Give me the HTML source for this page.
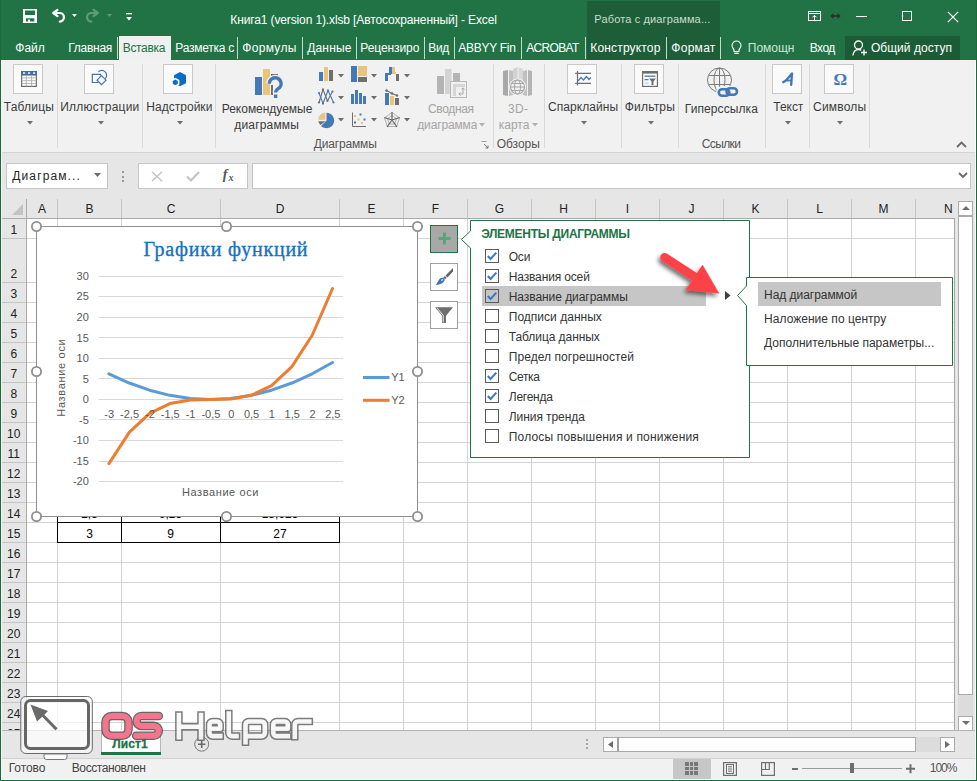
<!DOCTYPE html><html><head><meta charset="utf-8"><style>
*{margin:0;padding:0;box-sizing:border-box}
html,body{width:977px;height:781px;overflow:hidden;background:#fff;font-family:"Liberation Sans",sans-serif;font-size:12px;color:#262626}
.a{position:absolute}
.t{position:absolute;white-space:nowrap;line-height:1}
svg.a{overflow:visible}
</style></head><body>
<div class="a" style="left:0px;top:0px;width:977px;height:60px;background:#217346;"></div>
<div class="a" style="left:587px;top:1px;width:133px;height:59px;background:#1d5e39;"></div>
<div class="a" style="left:845px;top:36px;width:115px;height:24px;background:#1b5c37;"></div>
<div class="a" style="left:119px;top:36px;width:52px;height:24px;background:#f0f0f0;"></div>
<div class="t" style="left:230.28px;top:13.84px;font-size:12px;color:#fff;letter-spacing:-0.124px;">Книга1 (version 1).xlsb [Автосохраненный] - Excel</div>
<div class="t" style="left:594.34px;top:14.39px;font-size:11px;color:#c9dccb;letter-spacing:0.137px;">Работа с диаграмма...</div>
<div class="t" style="left:15.28px;top:41.84px;font-size:12px;color:#fff;letter-spacing:0.021px;">Файл</div>
<div class="t" style="left:68.28px;top:41.84px;font-size:12px;color:#fff;letter-spacing:-0.268px;">Главная</div>
<div class="t" style="left:175.28px;top:41.84px;font-size:12px;color:#fff;letter-spacing:-0.236px;">Разметка с</div>
<div class="t" style="left:242.28px;top:41.84px;font-size:12px;color:#fff;letter-spacing:0.310px;">Формулы</div>
<div class="t" style="left:307.28px;top:41.84px;font-size:12px;color:#fff;letter-spacing:0.144px;">Данные</div>
<div class="t" style="left:360.28px;top:41.84px;font-size:12px;color:#fff;letter-spacing:-0.084px;">Рецензиро</div>
<div class="t" style="left:428.28px;top:41.84px;font-size:12px;color:#fff;letter-spacing:-0.319px;">Вид</div>
<div class="t" style="left:526.28px;top:41.84px;font-size:12px;color:#fff;letter-spacing:-0.674px;">ACROBAT</div>
<div class="t" style="left:590.28px;top:41.84px;font-size:12px;color:#fff;letter-spacing:0.166px;">Конструктор</div>
<div class="t" style="left:671.28px;top:41.84px;font-size:12px;color:#fff;letter-spacing:0.288px;">Формат</div>
<div class="t" style="left:809.78px;top:41.84px;font-size:12px;color:#fff;letter-spacing:-0.525px;">Вход</div>
<div class="t" style="left:870.88px;top:41.84px;font-size:12px;color:#fff;letter-spacing:0.041px;">Общий доступ</div>
<div class="t" style="left:458.28px;top:41.84px;font-size:12px;color:#fff;letter-spacing:-0.267px;width:58px;overflow:hidden;">ABBYY Fine</div>
<div class="t" style="left:122.78px;top:41.84px;font-size:12px;color:#217346;letter-spacing:-0.338px;">Вставка</div>
<div class="t" style="left:747.78px;top:41.84px;font-size:12px;color:#cfe6d6;width:46.5px;overflow:hidden;">Помощник</div>
<div class="a" style="left:117px;top:37px;width:1px;height:22px;background:#c5dacc;"></div>
<div class="a" style="left:237px;top:37px;width:1px;height:22px;background:#c5dacc;"></div>
<div class="a" style="left:302px;top:37px;width:1px;height:22px;background:#c5dacc;"></div>
<div class="a" style="left:356px;top:37px;width:1px;height:22px;background:#c5dacc;"></div>
<div class="a" style="left:424px;top:37px;width:1px;height:22px;background:#c5dacc;"></div>
<div class="a" style="left:454px;top:37px;width:1px;height:22px;background:#c5dacc;"></div>
<div class="a" style="left:521px;top:37px;width:1px;height:22px;background:#c5dacc;"></div>
<div class="a" style="left:585px;top:37px;width:1px;height:22px;background:#c5dacc;"></div>
<div class="a" style="left:666px;top:37px;width:1px;height:22px;background:#c5dacc;"></div>
<div class="a" style="left:720px;top:37px;width:1px;height:22px;background:#c5dacc;"></div>
<svg class="a" style="left:22px;top:9px;" width="16" height="15" viewBox="0 0 16 15"><path d="M1 0H15V14H1Z M3 1.5V6.1H13V1.5Z M4 9.2H12.3V12.6H8V10.5H6.1V12.6H4Z" fill="#fff" fill-rule="evenodd"/></svg>
<svg class="a" style="left:51px;top:8px;" width="14" height="15" viewBox="0 0 14 15"><path d="M5 5H8.5A4.3 4.3 0 0 1 8.8 13.6" fill="none" stroke="#fff" stroke-width="2.2" stroke-linecap="round"/><path d="M6.5 1.8L2.2 5L6.5 8.2" fill="none" stroke="#fff" stroke-width="2.2" stroke-linecap="round" stroke-linejoin="round"/></svg>
<svg class="a" style="left:72px;top:14px;" width="5" height="3" viewBox="0 0 5 3"><path d="M0 0H5L2.5 3Z" fill="#fff"/></svg>
<svg class="a" style="left:86px;top:8px;" width="14" height="15" viewBox="0 0 14 15"><path d="M9 5H5.5A4.3 4.3 0 0 0 5.2 13.6" fill="none" stroke="#5f9c78" stroke-width="2.2" stroke-linecap="round"/><path d="M7.5 1.8L11.8 5L7.5 8.2" fill="none" stroke="#5f9c78" stroke-width="2.2" stroke-linecap="round" stroke-linejoin="round"/></svg>
<svg class="a" style="left:107px;top:14px;" width="5" height="3" viewBox="0 0 5 3"><path d="M0 0H5L2.5 3Z" fill="#5f9c78"/></svg>
<svg class="a" style="left:126px;top:13px;" width="6" height="9" viewBox="0 0 6 9"><rect x="0" y="0" width="6" height="1.3" fill="#fff"/><path d="M0 4H6L3 7.5Z" fill="#fff"/></svg>
<svg class="a" style="left:808px;top:11px;" width="13" height="10" viewBox="0 0 13 10"><rect x="0.5" y="0.5" width="12" height="9" fill="none" stroke="#fff" stroke-width="1"/><path d="M0.5 2.5H12.5" stroke="#fff"/><path d="M6.5 9V4.5M4.5 6.3L6.5 4.3L8.5 6.3" fill="none" stroke="#fff" stroke-width="1"/></svg>
<svg class="a" style="left:830px;top:12px;" width="11" height="8" viewBox="0 0 11 8"><path d="M2.5 4H8.5" stroke="#2b2b2b" stroke-width="1.6"/><path d="M0.3 4L3.5 1V7Z M10.7 4L7.5 1V7Z" fill="#2b2b2b"/></svg>
<div class="a" style="left:856px;top:16px;width:11px;height:1px;background:#fff;"></div>
<svg class="a" style="left:902px;top:11px;" width="11" height="11" viewBox="0 0 11 11"><rect x="0.5" y="0.5" width="9" height="9" fill="none" stroke="#fff" stroke-width="1"/></svg>
<svg class="a" style="left:947px;top:11px;" width="12" height="12" viewBox="0 0 12 12"><path d="M0.8 0.8L11.2 11.2M11.2 0.8L0.8 11.2" stroke="#fff" stroke-width="1.2"/></svg>
<svg class="a" style="left:731px;top:40px;" width="11" height="15" viewBox="0 0 11 15"><path d="M5.5 1A4.5 4.5 0 0 0 1 5.5C1 7.5 2.5 8.7 3 10V11.5H8V10C8.5 8.7 10 7.5 10 5.5A4.5 4.5 0 0 0 5.5 1Z" fill="none" stroke="#fff" stroke-width="1.1"/><path d="M3.2 13.3H7.8" stroke="#fff" stroke-width="1.2"/></svg>
<svg class="a" style="left:852px;top:40px;" width="16" height="16" viewBox="0 0 16 16"><circle cx="6.5" cy="5" r="4" fill="none" stroke="#fff" stroke-width="1.3"/><path d="M0.8 15.5C1.5 11.5 3.5 9.5 6.5 9.5C7.5 9.5 8.5 9.8 9.2 10.3" fill="none" stroke="#fff" stroke-width="1.3"/><path d="M12 9.5V15.5M9 12.5H15" stroke="#fff" stroke-width="1.3"/></svg>
<div class="a" style="left:0px;top:60px;width:977px;height:92px;background:#f1f1f1;"></div>
<div class="a" style="left:0px;top:152px;width:977px;height:1px;background:#d4d4d4;"></div>
<div class="a" style="left:57px;top:64px;width:1px;height:84px;background:#d8d8d8;"></div>
<div class="a" style="left:142px;top:64px;width:1px;height:84px;background:#d8d8d8;"></div>
<div class="a" style="left:215px;top:64px;width:1px;height:84px;background:#d8d8d8;"></div>
<div class="a" style="left:493px;top:64px;width:1px;height:84px;background:#d8d8d8;"></div>
<div class="a" style="left:544px;top:64px;width:1px;height:84px;background:#d8d8d8;"></div>
<div class="a" style="left:621px;top:64px;width:1px;height:84px;background:#d8d8d8;"></div>
<div class="a" style="left:678px;top:64px;width:1px;height:84px;background:#d8d8d8;"></div>
<div class="a" style="left:765px;top:64px;width:1px;height:84px;background:#d8d8d8;"></div>
<div class="a" style="left:809px;top:64px;width:1px;height:84px;background:#d8d8d8;"></div>
<div class="a" style="left:869px;top:64px;width:1px;height:84px;background:#d8d8d8;"></div>
<div class="a" style="left:13px;top:64px;width:30px;height:30px;background:#fafafa;border:1px solid #c9c9c9;"></div>
<svg class="a" style="left:21px;top:71px;" width="16" height="16" viewBox="0 0 16 16"><rect x="0" y="0" width="16" height="4" fill="#3d6eb4"/><rect x="2" y="1.3" width="2.2" height="1.4" fill="#fff"/><rect x="7" y="1.3" width="2.2" height="1.4" fill="#fff"/><rect x="12" y="1.3" width="2.2" height="1.4" fill="#fff"/><rect x="0.6" y="4" width="14.8" height="11.4" fill="#fff" stroke="#6b6b6b" stroke-width="1.2"/><path d="M5.3 4V15.4M10.6 4V15.4M0.6 6.9H15.4M0.6 9.7H15.4M0.6 12.5H15.4" stroke="#b0b0b0" stroke-width="0.9"/></svg>
<div class="t" style="left:3.78px;top:100.84px;font-size:12px;color:#3b3b3b;letter-spacing:0.177px;">Таблицы</div>
<svg class="a" style="left:27px;top:121px;" width="6" height="3.5" viewBox="0 0 6 3.5"><path d="M0 0H6L3.0 3.5Z" fill="#6d6d6d"/></svg>
<div class="a" style="left:84px;top:64px;width:30px;height:30px;background:#fafafa;border:1px solid #c9c9c9;"></div>
<svg class="a" style="left:91px;top:70px;" width="16" height="16" viewBox="0 0 16 16"><path d="M7.5 12.5H1.3V4.3H9.5V5.5" fill="none" stroke="#3f76b8" stroke-width="1.2"/><path d="M10.5 7.2L15 11.7L10.5 16.2L6 11.7Z" transform="translate(0,-1.5)" fill="none" stroke="#3f76b8" stroke-width="1.2"/><path d="M7.3 1.8A4.8 4.8 0 0 1 14.2 8.7" fill="none" stroke="#3f76b8" stroke-width="1.2"/></svg>
<div class="t" style="left:60.28px;top:100.84px;font-size:12px;color:#3b3b3b;letter-spacing:0.231px;">Иллюстрации</div>
<svg class="a" style="left:98px;top:121px;" width="6" height="3.5" viewBox="0 0 6 3.5"><path d="M0 0H6L3.0 3.5Z" fill="#6d6d6d"/></svg>
<div class="a" style="left:163px;top:64px;width:30px;height:30px;background:#fafafa;border:1px solid #c9c9c9;"></div>
<svg class="a" style="left:171px;top:71px;" width="16" height="16" viewBox="0 0 16 16"><path d="M9 1L15 4.2V12.3L9 15.2L3 12.3V4.2Z" fill="#0b6cc4"/><path d="M4.3 7.6L7.6 9.5V13.2L4.3 15.1L1 13.2V9.5Z" fill="#0b6cc4" stroke="#fafafa" stroke-width="1.6" stroke-linejoin="round"/></svg>
<div class="t" style="left:146.28px;top:100.84px;font-size:12px;color:#3b3b3b;letter-spacing:0.026px;">Надстройки</div>
<svg class="a" style="left:176.5px;top:121px;" width="6" height="3.5" viewBox="0 0 6 3.5"><path d="M0 0H6L3.0 3.5Z" fill="#6d6d6d"/></svg>
<svg class="a" style="left:254px;top:68px;" width="30" height="31" viewBox="0 0 30 31"><rect x="1" y="9" width="7" height="18" fill="#4479b8"/><rect x="9" y="1" width="7" height="26" fill="#eac47c"/><rect x="17" y="6" width="7" height="3.5" fill="#6e6e6e"/><path d="M18 27V17" fill="none" stroke="#6e6e6e" stroke-width="2"/><path d="M15.3 15.8A5.9 5.9 0 1 1 25.6 19.6C23.2 21.4 21.6 22 21.6 24.6" fill="none" stroke="#f1f1f1" stroke-width="6"/><path d="M15.3 15.8A5.9 5.9 0 1 1 25.6 19.6C23.2 21.4 21.6 22 21.6 24.6" fill="none" stroke="#4479b8" stroke-width="3.3"/><rect x="19.9" y="26.5" width="3.4" height="3.5" fill="#4479b8"/></svg>
<div class="t" style="left:221.78px;top:102.84px;font-size:12px;color:#3b3b3b;letter-spacing:-0.023px;">Рекомендуемые</div>
<div class="t" style="left:234.28px;top:118.84px;font-size:12px;color:#3b3b3b;letter-spacing:0.168px;">диаграммы</div>
<svg class="a" style="left:318px;top:66px;" width="16" height="16" viewBox="0 0 16 16"><rect x="1" y="6" width="4" height="9" fill="#4479b8"/><rect x="6" y="1" width="4" height="14" fill="#eac47c"/><rect x="11" y="4" width="4" height="11" fill="#6e6e6e"/></svg>
<svg class="a" style="left:338px;top:73.5px;" width="6" height="3.5" viewBox="0 0 6 3.5"><path d="M0 0H6L3.0 3.5Z" fill="#6d6d6d"/></svg>
<svg class="a" style="left:351px;top:66px;" width="17" height="17" viewBox="0 0 17 17"><rect x="0" y="0" width="6" height="16" fill="#4479b8"/><rect x="7" y="0" width="9" height="10" fill="#eac47c"/><rect x="7" y="11" width="9" height="5" fill="#6e6e6e"/></svg>
<svg class="a" style="left:371px;top:73.5px;" width="6" height="3.5" viewBox="0 0 6 3.5"><path d="M0 0H6L3.0 3.5Z" fill="#6d6d6d"/></svg>
<svg class="a" style="left:384px;top:66px;" width="16" height="16" viewBox="0 0 16 16"><rect x="1" y="7" width="3" height="8" fill="#4479b8"/><rect x="1" y="7" width="6" height="2" fill="#4479b8"/><rect x="5" y="1" width="3" height="7" fill="#4479b8"/><rect x="8" y="1" width="3" height="7" fill="#eac47c"/><rect x="9" y="6" width="3" height="2" fill="#eac47c"/><rect x="12" y="8" width="3" height="7" fill="#6e6e6e"/></svg>
<svg class="a" style="left:404px;top:73.5px;" width="6" height="3.5" viewBox="0 0 6 3.5"><path d="M0 0H6L3.0 3.5Z" fill="#6d6d6d"/></svg>
<svg class="a" style="left:318px;top:88px;" width="17" height="17" viewBox="0 0 17 17"><path d="M1 14.5L5 1.5L9.5 13L14.5 3.5" fill="none" stroke="#6e6e6e" stroke-width="1.1"/><path d="M1 5L5 15.5L10 2.5L15.5 14.5" fill="none" stroke="#4479b8" stroke-width="1.1"/><circle cx="1" cy="5" r="1.1" fill="#4479b8"/><circle cx="15.5" cy="14.5" r="1.1" fill="#4479b8"/><circle cx="5" cy="15.5" r="1.1" fill="#4479b8"/><circle cx="10" cy="2.5" r="1.1" fill="#4479b8"/><circle cx="1" cy="14.5" r="1.1" fill="#6e6e6e"/><circle cx="5" cy="1.5" r="1.1" fill="#6e6e6e"/><circle cx="9.5" cy="13" r="1.1" fill="#6e6e6e"/><circle cx="14.5" cy="3.5" r="1.1" fill="#6e6e6e"/></svg>
<svg class="a" style="left:338px;top:96px;" width="6" height="3.5" viewBox="0 0 6 3.5"><path d="M0 0H6L3.0 3.5Z" fill="#6d6d6d"/></svg>
<svg class="a" style="left:351px;top:89px;" width="16" height="16" viewBox="0 0 16 16"><rect x="0" y="5" width="3" height="10" fill="#4479b8"/><rect x="4" y="1" width="3" height="14" fill="#4479b8"/><rect x="8" y="4" width="3" height="11" fill="#4479b8"/><rect x="12" y="7" width="3" height="8" fill="#4479b8"/></svg>
<svg class="a" style="left:371px;top:96px;" width="6" height="3.5" viewBox="0 0 6 3.5"><path d="M0 0H6L3.0 3.5Z" fill="#6d6d6d"/></svg>
<svg class="a" style="left:384px;top:89px;" width="16" height="17" viewBox="0 0 16 17"><rect x="1" y="4" width="4" height="12" fill="#4479b8"/><rect x="6" y="7" width="4" height="9" fill="#eac47c"/><rect x="11" y="9" width="4" height="7" fill="#6e6e6e"/><path d="M2.5 1.5L8 4.5L13 6.5" fill="none" stroke="#6e6e6e" stroke-width="1.1"/><circle cx="2.5" cy="1.5" r="1.3" fill="#6e6e6e"/><circle cx="8" cy="4.5" r="1.3" fill="#6e6e6e"/><circle cx="13" cy="6.5" r="1.3" fill="#6e6e6e"/></svg>
<svg class="a" style="left:404px;top:96px;" width="6" height="3.5" viewBox="0 0 6 3.5"><path d="M0 0H6L3.0 3.5Z" fill="#6d6d6d"/></svg>
<svg class="a" style="left:317px;top:111px;" width="18" height="18" viewBox="0 0 18 18"><path d="M9.5 9.5V1.8A7.7 7.7 0 1 1 4 14.9Z" fill="#4479b8"/><path d="M8.3 8.8H1.2A7.2 7.2 0 0 1 8.3 1.6Z" fill="#eac47c"/><path d="M8.5 10.3L3.3 14A7.2 7.2 0 0 1 1.3 10.3Z" fill="#6e6e6e"/></svg>
<svg class="a" style="left:338px;top:118px;" width="6" height="3.5" viewBox="0 0 6 3.5"><path d="M0 0H6L3.0 3.5Z" fill="#6d6d6d"/></svg>
<svg class="a" style="left:351px;top:112px;" width="16" height="16" viewBox="0 0 16 16"><path d="M1.5 0.5V14.5H15" fill="none" stroke="#6e6e6e" stroke-width="1"/><rect x="3" y="3" width="2" height="2" fill="#eac47c"/><rect x="8.5" y="1.5" width="2" height="2" fill="#4479b8"/><rect x="6.5" y="6.5" width="2" height="2" fill="#eac47c"/><rect x="12.5" y="6.5" width="2" height="2" fill="#4479b8"/><rect x="3" y="9.5" width="2" height="2" fill="#4479b8"/><rect x="10" y="10" width="2" height="2" fill="#eac47c"/></svg>
<svg class="a" style="left:371px;top:118px;" width="6" height="3.5" viewBox="0 0 6 3.5"><path d="M0 0H6L3.0 3.5Z" fill="#6d6d6d"/></svg>
<svg class="a" style="left:383px;top:111px;" width="18" height="18" viewBox="0 0 18 18"><path d="M9 1.5L16.5 6.8L13.6 15.5H4.4L1.5 6.8Z" fill="none" stroke="#a0a0a0" stroke-width="0.8"/><path d="M9 4.5L13.5 7.7L11.8 13H6.2L4.5 7.7Z" fill="none" stroke="#a0a0a0" stroke-width="0.8"/><path d="M9 1V9M16.8 6.5L9 9M14 16L9 9M4 16L9 9M1.2 6.5L9 9" stroke="#666" stroke-width="1.2"/></svg>
<svg class="a" style="left:404px;top:118px;" width="6" height="3.5" viewBox="0 0 6 3.5"><path d="M0 0H6L3.0 3.5Z" fill="#6d6d6d"/></svg>
<div class="t" style="left:313.78px;top:138.04px;font-size:12px;color:#555;letter-spacing:-0.160px;">Диаграммы</div>
<svg class="a" style="left:436px;top:68px;" width="32" height="31" viewBox="0 0 32 31"><rect x="1" y="8" width="7" height="18" fill="#b4b4b4"/><rect x="9" y="1" width="6.5" height="25" fill="#d3d3d3"/><rect x="17" y="5" width="7" height="8" fill="#b4b4b4"/><rect x="14.5" y="13.5" width="16" height="16" fill="#f1f1f1" stroke="#b8b8b8" stroke-width="1"/><rect x="17" y="16" width="3" height="12" fill="#d6d6d6"/><rect x="17" y="16" width="12" height="3" fill="#d6d6d6"/><path d="M23 26H27V20M25.5 21.5L27 19.8L28.5 21.5M24.5 24.5L22.8 26L24.5 27.5" fill="none" stroke="#a8a8a8" stroke-width="1"/></svg>
<div class="t" style="left:428.03px;top:102.84px;font-size:12px;color:#a4a4a4;letter-spacing:-0.341px;">Сводная</div>
<div class="t" style="left:417.28px;top:118.84px;font-size:12px;color:#a4a4a4;letter-spacing:-0.150px;width:60px;overflow:hidden;">диаграмма</div>
<svg class="a" style="left:479px;top:123px;" width="6" height="3.5" viewBox="0 0 6 3.5"><path d="M0 0H6L3.0 3.5Z" fill="#b0b0b0"/></svg>
<svg class="a" style="left:481px;top:141px;" width="8" height="8" viewBox="0 0 8 8"><path d="M0.5 0.5H7.5V7.5H0.5Z" fill="none" stroke="#888" stroke-width="0.8" stroke-dasharray="5,30"/><path d="M3 3L7 7M4.5 7H7V4.5" fill="none" stroke="#777" stroke-width="1"/></svg>
<svg class="a" style="left:502px;top:67px;" width="31" height="30" viewBox="0 0 31 30"><path d="M1 4L6 3V29L1 28Z" fill="#a8a8a8"/><path d="M7 3L11 4V28L7 29Z" fill="#c0c0c0"/><path d="M11 2L15.5 0V28L11 27Z" fill="#d2d2d2"/><path d="M16.5 0L21 2V27L16.5 28Z" fill="#d8d8d8"/><path d="M21 4L25 3V29L21 28Z" fill="#c0c0c0"/><path d="M26 3L30 4V28L26 29Z" fill="#b4b4b4"/><circle cx="15.5" cy="20" r="8.5" fill="#f1f1f1"/><circle cx="15.5" cy="20" r="7" fill="none" stroke="#a6a6a6" stroke-width="1.2"/><ellipse cx="15.5" cy="20" rx="3" ry="7" fill="none" stroke="#a6a6a6" stroke-width="1"/><path d="M8.5 20H22.5M9.5 16.5H21.5M9.5 23.5H21.5" stroke="#a6a6a6" stroke-width="1"/></svg>
<div class="t" style="left:508.03px;top:102.84px;font-size:12px;color:#a4a4a4;letter-spacing:0.368px;">3D-</div>
<div class="t" style="left:498.78px;top:118.84px;font-size:12px;color:#a4a4a4;letter-spacing:-0.015px;">карта</div>
<svg class="a" style="left:532px;top:123px;" width="6" height="3.5" viewBox="0 0 6 3.5"><path d="M0 0H6L3.0 3.5Z" fill="#b0b0b0"/></svg>
<div class="t" style="left:496.78px;top:138.04px;font-size:12px;color:#555;letter-spacing:-0.043px;">Обзоры</div>
<div class="a" style="left:567px;top:64px;width:30px;height:30px;background:#fafafa;border:1px solid #c9c9c9;"></div>
<svg class="a" style="left:574px;top:71px;" width="18" height="16" viewBox="0 0 18 16"><path d="M3.5 0V14.6M1.2 2.3H17M1.2 12.4H17" fill="none" stroke="#6e6e6e" stroke-width="1.2"/><path d="M4 10L7 6.5L9.5 9L12.5 5.5L15 8.5L17 6.5" fill="none" stroke="#4479b8" stroke-width="1.2"/></svg>
<div class="t" style="left:548.03px;top:100.84px;font-size:12px;color:#3b3b3b;letter-spacing:0.061px;">Спарклайны</div>
<svg class="a" style="left:581px;top:121px;" width="6" height="3.5" viewBox="0 0 6 3.5"><path d="M0 0H6L3.0 3.5Z" fill="#6d6d6d"/></svg>
<div class="a" style="left:634px;top:64px;width:30px;height:30px;background:#fafafa;border:1px solid #c9c9c9;"></div>
<svg class="a" style="left:642px;top:71px;" width="16" height="16" viewBox="0 0 16 16"><rect x="0.6" y="0.6" width="14.8" height="14.8" fill="#fff" stroke="#6e6e6e" stroke-width="1.2"/><rect x="0.6" y="0.6" width="14.8" height="2" fill="#6e6e6e"/><rect x="2.5" y="4.5" width="11" height="1.3" fill="#4479b8"/><rect x="2.5" y="8" width="4" height="1.3" fill="#4479b8"/><rect x="2.5" y="11.5" width="4" height="1.3" fill="#b7cbe4"/><path d="M7 7.5H14L11.5 10.5V14H9.5V10.5Z" fill="#6e6e6e"/></svg>
<div class="t" style="left:624.78px;top:100.84px;font-size:12px;color:#3b3b3b;letter-spacing:0.190px;">Фильтры</div>
<svg class="a" style="left:647.5px;top:121px;" width="6" height="3.5" viewBox="0 0 6 3.5"><path d="M0 0H6L3.0 3.5Z" fill="#6d6d6d"/></svg>
<svg class="a" style="left:706px;top:67px;" width="33" height="32" viewBox="0 0 33 32"><circle cx="13.5" cy="13" r="12" fill="none" stroke="#7a7a7a" stroke-width="1"/><ellipse cx="13.5" cy="13" rx="5.5" ry="12" fill="none" stroke="#7a7a7a" stroke-width="1"/><path d="M13.5 1V25M3 8.5H24M3 17.5H24" stroke="#7a7a7a" stroke-width="1"/><rect x="10" y="19" width="23" height="12" rx="6" fill="#f1f1f1"/><rect x="12.8" y="22.2" width="10.5" height="6.6" rx="3.3" fill="none" stroke="#4479b8" stroke-width="2.6"/><rect x="20.5" y="21.2" width="10.5" height="6.6" rx="3.3" fill="none" stroke="#4479b8" stroke-width="2.6"/></svg>
<div class="t" style="left:684.78px;top:102.84px;font-size:12px;color:#3b3b3b;letter-spacing:0.089px;">Гиперссылка</div>
<div class="t" style="left:701.78px;top:138.04px;font-size:12px;color:#555;letter-spacing:-0.634px;">Ссылки</div>
<div class="a" style="left:772px;top:64px;width:30px;height:30px;background:#fafafa;border:1px solid #c9c9c9;"></div>
<svg class="a" style="left:782px;top:72px;" width="12" height="14" viewBox="0 0 12 14"><path d="M1.2 10.2C3 9.6 4 8.5 6 6.2L10 1.5L9.2 12.8" fill="none" stroke="#3f76b8" stroke-width="2.3" stroke-linecap="round" stroke-linejoin="round"/><path d="M4.5 8.5H9.5" stroke="#3f76b8" stroke-width="1.8"/></svg>
<div class="t" style="left:773.28px;top:100.84px;font-size:12px;color:#3b3b3b;letter-spacing:-0.035px;">Текст</div>
<svg class="a" style="left:784.5px;top:121px;" width="6" height="3.5" viewBox="0 0 6 3.5"><path d="M0 0H6L3.0 3.5Z" fill="#6d6d6d"/></svg>
<div class="a" style="left:824px;top:64px;width:30px;height:30px;background:#fafafa;border:1px solid #c9c9c9;"></div>
<div class="t" style="left:833.48px;top:71.11px;font-size:17px;color:#4479b8;font-weight:700;font-family:'Liberation Serif',serif;">Ω</div>
<div class="t" style="left:813.03px;top:100.84px;font-size:12px;color:#3b3b3b;letter-spacing:0.196px;">Символы</div>
<svg class="a" style="left:836.5px;top:121px;" width="6" height="3.5" viewBox="0 0 6 3.5"><path d="M0 0H6L3.0 3.5Z" fill="#6d6d6d"/></svg>
<svg class="a" style="left:956px;top:141px;" width="11" height="7" viewBox="0 0 11 7"><path d="M1 6L5.5 1.5L10 6" fill="none" stroke="#6a6a6a" stroke-width="1.8"/></svg>
<div class="a" style="left:0px;top:153px;width:977px;height:46px;background:#e6e6e6;"></div>
<div class="a" style="left:6px;top:163px;width:102px;height:26px;background:#fff;border:1px solid #c6c6c6;"></div>
<div class="t" style="left:12.28px;top:169.84px;font-size:12px;color:#262626;letter-spacing:1.122px;">Диаграм...</div>
<svg class="a" style="left:94px;top:173px;" width="7" height="4" viewBox="0 0 7 4"><path d="M0 0H7L3.5 4Z" fill="#6d6d6d"/></svg>
<div class="a" style="left:122px;top:171px;width:2px;height:2px;background:#9a9a9a;"></div>
<div class="a" style="left:122px;top:175.5px;width:2px;height:2px;background:#9a9a9a;"></div>
<div class="a" style="left:122px;top:180px;width:2px;height:2px;background:#9a9a9a;"></div>
<div class="a" style="left:138px;top:163px;width:110px;height:26px;background:#fff;border:1px solid #c6c6c6;"></div>
<svg class="a" style="left:151px;top:171px;" width="12" height="11" viewBox="0 0 12 11"><path d="M1 0.8L11 10.2M11 0.8L1 10.2" stroke="#c4c4c4" stroke-width="1.5"/></svg>
<svg class="a" style="left:186px;top:171px;" width="14" height="11" viewBox="0 0 14 11"><path d="M1 5.5L5 9.5L13 1" fill="none" stroke="#c4c4c4" stroke-width="2.2"/></svg>
<div class="t" style="left:222.66px;top:168.15px;font-size:14px;color:#555;font-weight:700;font-family:'Liberation Serif',serif;font-style:italic;">f</div>
<div class="t" style="left:228.40px;top:172.53px;font-size:10px;color:#555;font-weight:700;font-family:'Liberation Serif',serif;font-style:italic;">x</div>
<div class="a" style="left:252px;top:163px;width:719px;height:26px;background:#fff;border:1px solid #c6c6c6;"></div>
<svg class="a" style="left:957.5px;top:172px;" width="10" height="6" viewBox="0 0 10 6"><path d="M1 1L5 5L9 1" fill="none" stroke="#6a6a6a" stroke-width="1.8"/></svg>
<div class="a" style="left:0px;top:199px;width:955px;height:19px;background:#e6e6e6;"></div>
<div class="a" style="left:0px;top:218px;width:955px;height:1px;background:#ababab;"></div>
<div class="a" style="left:0px;top:219px;width:26px;height:511px;background:#e6e6e6;"></div>
<div class="a" style="left:26px;top:199px;width:1px;height:531px;background:#ababab;"></div>
<svg class="a" style="left:12px;top:204px;" width="11" height="11" viewBox="0 0 11 11"><path d="M11 0V11H0Z" fill="#c3c3c3"/></svg>
<div class="a" style="left:57px;top:199px;width:1px;height:19px;background:#c4c4c4;"></div>
<div class="a" style="left:121px;top:199px;width:1px;height:19px;background:#c4c4c4;"></div>
<div class="a" style="left:220px;top:199px;width:1px;height:19px;background:#c4c4c4;"></div>
<div class="a" style="left:339px;top:199px;width:1px;height:19px;background:#c4c4c4;"></div>
<div class="a" style="left:403px;top:199px;width:1px;height:19px;background:#c4c4c4;"></div>
<div class="a" style="left:467px;top:199px;width:1px;height:19px;background:#c4c4c4;"></div>
<div class="a" style="left:531px;top:199px;width:1px;height:19px;background:#c4c4c4;"></div>
<div class="a" style="left:595px;top:199px;width:1px;height:19px;background:#c4c4c4;"></div>
<div class="a" style="left:659px;top:199px;width:1px;height:19px;background:#c4c4c4;"></div>
<div class="a" style="left:723px;top:199px;width:1px;height:19px;background:#c4c4c4;"></div>
<div class="a" style="left:787px;top:199px;width:1px;height:19px;background:#c4c4c4;"></div>
<div class="a" style="left:851px;top:199px;width:1px;height:19px;background:#c4c4c4;"></div>
<div class="a" style="left:915px;top:199px;width:1px;height:19px;background:#c4c4c4;"></div>
<div class="t" style="left:37.99px;top:202.84px;font-size:12px;color:#222;">A</div>
<div class="t" style="left:85.49px;top:202.84px;font-size:12px;color:#222;">B</div>
<div class="t" style="left:166.66px;top:202.84px;font-size:12px;color:#222;">C</div>
<div class="t" style="left:275.66px;top:202.84px;font-size:12px;color:#222;">D</div>
<div class="t" style="left:367.49px;top:202.84px;font-size:12px;color:#222;">E</div>
<div class="t" style="left:431.83px;top:202.84px;font-size:12px;color:#222;">F</div>
<div class="t" style="left:494.83px;top:202.84px;font-size:12px;color:#222;">G</div>
<div class="t" style="left:559.16px;top:202.84px;font-size:12px;color:#222;">H</div>
<div class="t" style="left:625.83px;top:202.84px;font-size:12px;color:#222;">I</div>
<div class="t" style="left:688.50px;top:202.84px;font-size:12px;color:#222;">J</div>
<div class="t" style="left:751.49px;top:202.84px;font-size:12px;color:#222;">K</div>
<div class="t" style="left:816.16px;top:202.84px;font-size:12px;color:#222;">L</div>
<div class="t" style="left:878.50px;top:202.84px;font-size:12px;color:#222;">M</div>
<div class="t" style="left:943.96px;top:202.84px;font-size:12px;color:#222;">N</div>
<div class="a" style="left:27px;top:238px;width:928px;height:1px;background:#d4d4d4;"></div>
<div class="a" style="left:0px;top:238px;width:26px;height:1px;background:#c4c4c4;"></div>
<div class="a" style="left:27px;top:282px;width:928px;height:1px;background:#d4d4d4;"></div>
<div class="a" style="left:0px;top:282px;width:26px;height:1px;background:#c4c4c4;"></div>
<div class="a" style="left:27px;top:302px;width:928px;height:1px;background:#d4d4d4;"></div>
<div class="a" style="left:0px;top:302px;width:26px;height:1px;background:#c4c4c4;"></div>
<div class="a" style="left:27px;top:322px;width:928px;height:1px;background:#d4d4d4;"></div>
<div class="a" style="left:0px;top:322px;width:26px;height:1px;background:#c4c4c4;"></div>
<div class="a" style="left:27px;top:342px;width:928px;height:1px;background:#d4d4d4;"></div>
<div class="a" style="left:0px;top:342px;width:26px;height:1px;background:#c4c4c4;"></div>
<div class="a" style="left:27px;top:362px;width:928px;height:1px;background:#d4d4d4;"></div>
<div class="a" style="left:0px;top:362px;width:26px;height:1px;background:#c4c4c4;"></div>
<div class="a" style="left:27px;top:382px;width:928px;height:1px;background:#d4d4d4;"></div>
<div class="a" style="left:0px;top:382px;width:26px;height:1px;background:#c4c4c4;"></div>
<div class="a" style="left:27px;top:402px;width:928px;height:1px;background:#d4d4d4;"></div>
<div class="a" style="left:0px;top:402px;width:26px;height:1px;background:#c4c4c4;"></div>
<div class="a" style="left:27px;top:422px;width:928px;height:1px;background:#d4d4d4;"></div>
<div class="a" style="left:0px;top:422px;width:26px;height:1px;background:#c4c4c4;"></div>
<div class="a" style="left:27px;top:442px;width:928px;height:1px;background:#d4d4d4;"></div>
<div class="a" style="left:0px;top:442px;width:26px;height:1px;background:#c4c4c4;"></div>
<div class="a" style="left:27px;top:462px;width:928px;height:1px;background:#d4d4d4;"></div>
<div class="a" style="left:0px;top:462px;width:26px;height:1px;background:#c4c4c4;"></div>
<div class="a" style="left:27px;top:482px;width:928px;height:1px;background:#d4d4d4;"></div>
<div class="a" style="left:0px;top:482px;width:26px;height:1px;background:#c4c4c4;"></div>
<div class="a" style="left:27px;top:502px;width:928px;height:1px;background:#d4d4d4;"></div>
<div class="a" style="left:0px;top:502px;width:26px;height:1px;background:#c4c4c4;"></div>
<div class="a" style="left:27px;top:522px;width:928px;height:1px;background:#d4d4d4;"></div>
<div class="a" style="left:0px;top:522px;width:26px;height:1px;background:#c4c4c4;"></div>
<div class="a" style="left:27px;top:542px;width:928px;height:1px;background:#d4d4d4;"></div>
<div class="a" style="left:0px;top:542px;width:26px;height:1px;background:#c4c4c4;"></div>
<div class="a" style="left:27px;top:562px;width:928px;height:1px;background:#d4d4d4;"></div>
<div class="a" style="left:0px;top:562px;width:26px;height:1px;background:#c4c4c4;"></div>
<div class="a" style="left:27px;top:582px;width:928px;height:1px;background:#d4d4d4;"></div>
<div class="a" style="left:0px;top:582px;width:26px;height:1px;background:#c4c4c4;"></div>
<div class="a" style="left:27px;top:602px;width:928px;height:1px;background:#d4d4d4;"></div>
<div class="a" style="left:0px;top:602px;width:26px;height:1px;background:#c4c4c4;"></div>
<div class="a" style="left:27px;top:622px;width:928px;height:1px;background:#d4d4d4;"></div>
<div class="a" style="left:0px;top:622px;width:26px;height:1px;background:#c4c4c4;"></div>
<div class="a" style="left:27px;top:642px;width:928px;height:1px;background:#d4d4d4;"></div>
<div class="a" style="left:0px;top:642px;width:26px;height:1px;background:#c4c4c4;"></div>
<div class="a" style="left:27px;top:662px;width:928px;height:1px;background:#d4d4d4;"></div>
<div class="a" style="left:0px;top:662px;width:26px;height:1px;background:#c4c4c4;"></div>
<div class="a" style="left:27px;top:682px;width:928px;height:1px;background:#d4d4d4;"></div>
<div class="a" style="left:0px;top:682px;width:26px;height:1px;background:#c4c4c4;"></div>
<div class="a" style="left:27px;top:702px;width:928px;height:1px;background:#d4d4d4;"></div>
<div class="a" style="left:0px;top:702px;width:26px;height:1px;background:#c4c4c4;"></div>
<div class="a" style="left:27px;top:722px;width:928px;height:1px;background:#d4d4d4;"></div>
<div class="a" style="left:0px;top:722px;width:26px;height:1px;background:#c4c4c4;"></div>
<div class="a" style="left:57px;top:219px;width:1px;height:511px;background:#d4d4d4;"></div>
<div class="a" style="left:121px;top:219px;width:1px;height:511px;background:#d4d4d4;"></div>
<div class="a" style="left:220px;top:219px;width:1px;height:511px;background:#d4d4d4;"></div>
<div class="a" style="left:339px;top:219px;width:1px;height:511px;background:#d4d4d4;"></div>
<div class="a" style="left:403px;top:219px;width:1px;height:511px;background:#d4d4d4;"></div>
<div class="a" style="left:467px;top:219px;width:1px;height:511px;background:#d4d4d4;"></div>
<div class="a" style="left:531px;top:219px;width:1px;height:511px;background:#d4d4d4;"></div>
<div class="a" style="left:595px;top:219px;width:1px;height:511px;background:#d4d4d4;"></div>
<div class="a" style="left:659px;top:219px;width:1px;height:511px;background:#d4d4d4;"></div>
<div class="a" style="left:723px;top:219px;width:1px;height:511px;background:#d4d4d4;"></div>
<div class="a" style="left:787px;top:219px;width:1px;height:511px;background:#d4d4d4;"></div>
<div class="a" style="left:851px;top:219px;width:1px;height:511px;background:#d4d4d4;"></div>
<div class="a" style="left:915px;top:219px;width:1px;height:511px;background:#d4d4d4;"></div>
<div class="a" style="left:954px;top:219px;width:1px;height:511px;background:#d0d0d0;"></div>
<div class="t" style="left:10.46px;top:223.54px;font-size:12px;color:#222;">1</div>
<div class="t" style="left:10.46px;top:267.54px;font-size:12px;color:#222;">2</div>
<div class="t" style="left:10.46px;top:287.54px;font-size:12px;color:#222;">3</div>
<div class="t" style="left:10.46px;top:307.54px;font-size:12px;color:#222;">4</div>
<div class="t" style="left:10.46px;top:327.54px;font-size:12px;color:#222;">5</div>
<div class="t" style="left:10.46px;top:347.54px;font-size:12px;color:#222;">6</div>
<div class="t" style="left:10.46px;top:367.54px;font-size:12px;color:#222;">7</div>
<div class="t" style="left:10.46px;top:387.54px;font-size:12px;color:#222;">8</div>
<div class="t" style="left:10.46px;top:407.54px;font-size:12px;color:#222;">9</div>
<div class="t" style="left:7.12px;top:427.54px;font-size:12px;color:#222;">10</div>
<div class="t" style="left:7.57px;top:447.54px;font-size:12px;color:#222;">11</div>
<div class="t" style="left:7.12px;top:467.54px;font-size:12px;color:#222;">12</div>
<div class="t" style="left:7.12px;top:487.54px;font-size:12px;color:#222;">13</div>
<div class="t" style="left:7.12px;top:507.54px;font-size:12px;color:#222;">14</div>
<div class="t" style="left:7.12px;top:527.54px;font-size:12px;color:#222;">15</div>
<div class="t" style="left:7.12px;top:547.54px;font-size:12px;color:#222;">16</div>
<div class="t" style="left:7.12px;top:567.54px;font-size:12px;color:#222;">17</div>
<div class="t" style="left:7.12px;top:587.54px;font-size:12px;color:#222;">18</div>
<div class="t" style="left:7.12px;top:607.54px;font-size:12px;color:#222;">19</div>
<div class="t" style="left:7.12px;top:627.54px;font-size:12px;color:#222;">20</div>
<div class="t" style="left:7.12px;top:647.54px;font-size:12px;color:#222;">21</div>
<div class="t" style="left:7.12px;top:667.54px;font-size:12px;color:#222;">22</div>
<div class="t" style="left:7.12px;top:687.54px;font-size:12px;color:#222;">23</div>
<div class="t" style="left:7.12px;top:707.54px;font-size:12px;color:#222;">24</div>
<div class="t" style="left:7.12px;top:727.54px;font-size:12px;color:#222;clip-path:inset(0 0 60% 0);">25</div>
<div class="a" style="left:57px;top:522px;width:283px;height:1px;background:#000;"></div>
<div class="a" style="left:57px;top:542px;width:283px;height:1px;background:#000;"></div>
<div class="a" style="left:57px;top:516px;width:1px;height:27px;background:#000;"></div>
<div class="a" style="left:121px;top:516px;width:1px;height:27px;background:#000;"></div>
<div class="a" style="left:220px;top:516px;width:1px;height:27px;background:#000;"></div>
<div class="a" style="left:339px;top:516px;width:1px;height:27px;background:#000;"></div>
<div class="t" style="left:86.16px;top:527.84px;font-size:12px;color:#000;">3</div>
<div class="t" style="left:167.16px;top:527.84px;font-size:12px;color:#000;">9</div>
<div class="t" style="left:273.32px;top:527.84px;font-size:12px;color:#000;">27</div>
<div class="t" style="left:81.16px;top:507.84px;font-size:12px;color:#000;">2,5</div>
<div class="t" style="left:158.82px;top:507.84px;font-size:12px;color:#000;">6,25</div>
<div class="t" style="left:261.65px;top:507.84px;font-size:12px;color:#000;">15,625</div>
<div class="a" style="left:37px;top:227px;width:380px;height:289px;background:#fff;"></div>
<svg class="a" style="left:0;top:0" width="977" height="781"><path d="M98.5 276.5H343" stroke="#d9d9d9" stroke-width="1"/><path d="M98.5 296.5H343" stroke="#d9d9d9" stroke-width="1"/><path d="M98.5 317.5H343" stroke="#d9d9d9" stroke-width="1"/><path d="M98.5 337.5H343" stroke="#d9d9d9" stroke-width="1"/><path d="M98.5 358.5H343" stroke="#d9d9d9" stroke-width="1"/><path d="M98.5 378.5H343" stroke="#d9d9d9" stroke-width="1"/><path d="M98.5 399.5H343" stroke="#d9d9d9" stroke-width="1"/><path d="M98.5 419.5H343" stroke="#d9d9d9" stroke-width="1"/><path d="M98.5 440.5H343" stroke="#d9d9d9" stroke-width="1"/><path d="M98.5 461.5H343" stroke="#d9d9d9" stroke-width="1"/><path d="M98.5 481.5H343" stroke="#d9d9d9" stroke-width="1"/><polyline points="108.91,373.77 129.25,383.01 149.57,390.20 169.91,395.34 190.23,398.42 210.56,399.45 230.89,398.42 251.22,395.34 271.55,390.20 291.88,383.01 312.21,373.77 332.54,362.47" fill="none" stroke="#5b9bd5" stroke-width="3" stroke-linejoin="round" stroke-linecap="round"/><polyline points="108.91,463.65 129.25,432.32 149.57,413.32 169.91,403.56 190.23,399.96 210.56,399.45 230.89,398.94 251.22,395.34 271.55,385.58 291.88,366.58 312.21,335.25 332.54,288.51" fill="none" stroke="#ed7d31" stroke-width="3" stroke-linejoin="round" stroke-linecap="round"/><path d="M363 377.5H389.5" stroke="#5b9bd5" stroke-width="3"/><path d="M363 400.3H389.5" stroke="#ed7d31" stroke-width="3"/></svg>
<div class="t" style="left:76.55px;top:270.87px;font-size:11px;color:#595959;">30</div>
<div class="t" style="left:76.55px;top:291.41px;font-size:11px;color:#595959;">25</div>
<div class="t" style="left:76.55px;top:311.96px;font-size:11px;color:#595959;">20</div>
<div class="t" style="left:76.55px;top:332.50px;font-size:11px;color:#595959;">15</div>
<div class="t" style="left:76.55px;top:353.05px;font-size:11px;color:#595959;">10</div>
<div class="t" style="left:82.67px;top:373.59px;font-size:11px;color:#595959;">5</div>
<div class="t" style="left:82.67px;top:394.14px;font-size:11px;color:#595959;">0</div>
<div class="t" style="left:79.02px;top:414.68px;font-size:11px;color:#595959;">-5</div>
<div class="t" style="left:72.89px;top:435.23px;font-size:11px;color:#595959;">-10</div>
<div class="t" style="left:72.89px;top:455.77px;font-size:11px;color:#595959;">-15</div>
<div class="t" style="left:72.89px;top:476.32px;font-size:11px;color:#595959;">-20</div>
<div class="t" style="left:104.32px;top:408.69px;font-size:11px;color:#595959;">-3</div>
<div class="t" style="left:120.06px;top:408.69px;font-size:11px;color:#595959;">-2,5</div>
<div class="t" style="left:144.98px;top:408.69px;font-size:11px;color:#595959;">-2</div>
<div class="t" style="left:160.72px;top:408.69px;font-size:11px;color:#595959;">-1,5</div>
<div class="t" style="left:185.64px;top:408.69px;font-size:11px;color:#595959;">-1</div>
<div class="t" style="left:201.38px;top:408.69px;font-size:11px;color:#595959;">-0,5</div>
<div class="t" style="left:228.13px;top:408.69px;font-size:11px;color:#595959;">0</div>
<div class="t" style="left:243.88px;top:408.69px;font-size:11px;color:#595959;">0,5</div>
<div class="t" style="left:268.79px;top:408.69px;font-size:11px;color:#595959;">1</div>
<div class="t" style="left:284.54px;top:408.69px;font-size:11px;color:#595959;">1,5</div>
<div class="t" style="left:309.45px;top:408.69px;font-size:11px;color:#595959;">2</div>
<div class="t" style="left:325.20px;top:408.69px;font-size:11px;color:#595959;">2,5</div>
<div class="t" style="left:181.94px;top:486.69px;font-size:11px;color:#595959;letter-spacing:0.591px;">Название оси</div>
<div class="t" style="left:391.14px;top:372.19px;font-size:11px;color:#595959;">Y1</div>
<div class="t" style="left:391.14px;top:394.99px;font-size:11px;color:#595959;">Y2</div>
<div class="t" style="left:22.2px;top:372px;width:80px;height:12px;font-size:11px;color:#595959;text-align:center;transform:rotate(-90deg);letter-spacing:0.68px;text-indent:0.68px">Название оси</div>
<div class="t" style="left:143.40px;top:239.07px;font-size:20px;color:#1570c2;font-family:'Liberation Serif',serif;letter-spacing:0.781px;-webkit-text-stroke:0.35px #1570c2;">Графики функций</div>
<svg class="a" style="left:0;top:0" width="977" height="781"><rect x="36.5" y="226.5" width="381" height="290" fill="none" stroke="#8f8f8f" stroke-width="1"/><circle cx="36.5" cy="226.5" r="4.6" fill="#fff" stroke="#8f8f8f" stroke-width="1.8"/><circle cx="226.5" cy="226.5" r="4.6" fill="#fff" stroke="#8f8f8f" stroke-width="1.8"/><circle cx="417.5" cy="226.5" r="4.6" fill="#fff" stroke="#8f8f8f" stroke-width="1.8"/><circle cx="36.5" cy="371.5" r="4.6" fill="#fff" stroke="#8f8f8f" stroke-width="1.8"/><circle cx="417.5" cy="371.5" r="4.6" fill="#fff" stroke="#8f8f8f" stroke-width="1.8"/><circle cx="36.5" cy="516.5" r="4.6" fill="#fff" stroke="#8f8f8f" stroke-width="1.8"/><circle cx="226.5" cy="516.5" r="4.6" fill="#fff" stroke="#8f8f8f" stroke-width="1.8"/><circle cx="417.5" cy="516.5" r="4.6" fill="#fff" stroke="#8f8f8f" stroke-width="1.8"/></svg>
<div class="a" style="left:430px;top:225px;width:28px;height:28px;background:#a8a8a8;border:1px solid #217346;"></div>
<svg class="a" style="left:438px;top:232px;" width="13" height="13" viewBox="0 0 13 13"><path d="M6.5 0.5V12.5M0.5 6.5H12.5" stroke="#5ba37a" stroke-width="3"/></svg>
<div class="a" style="left:430px;top:263px;width:28px;height:28px;background:#fff;border:1px solid #a0a0a0;"></div>
<svg class="a" style="left:434px;top:267px;" width="21" height="20" viewBox="0 0 21 20"><path d="M19 1L19 4.5L13.5 10.5L11.5 8.5Z" fill="#666"/><path d="M11.8 9.8L10.2 11.4" stroke="#666" stroke-width="2.6"/><path d="M9.5 11C7.5 10 5.5 11.5 4.5 13.5C3.5 15.5 2.5 16.8 1.5 17.8C5 17.8 8.5 16.8 10.2 14.2C11 12.8 10.8 11.6 9.5 11Z" fill="#3f76b8"/><path d="M8.8 12.2C7.8 12 7 12.8 7 13.6C7.6 13.8 8.8 13.6 9.3 12.8Z" fill="#fff"/></svg>
<div class="a" style="left:430px;top:301px;width:28px;height:28px;background:#fff;border:1px solid #a0a0a0;"></div>
<svg class="a" style="left:434px;top:306px;" width="20" height="18" viewBox="0 0 20 18"><path d="M1 1.2H19L12 9.8V17H8V9.8Z" fill="#6e6e6e"/><path d="M3.2 2.2L9.2 9.4V16.4" fill="none" stroke="#fff" stroke-width="0.9"/></svg>
<div class="a" style="left:470px;top:220px;width:280px;height:238px;background:#fff;"></div>
<svg class="a" style="left:0;top:0" width="977" height="781"><path d="M470.5 231V220.5H749.5V457.5H470.5V248L461.5 239.5Z" fill="#fff" stroke="#217346" stroke-width="1"/></svg>
<div class="t" style="left:481.18px;top:227.84px;font-size:12px;color:#217346;font-weight:700;letter-spacing:-0.277px;">ЭЛЕМЕНТЫ ДИАГРАММЫ</div>
<div class="a" style="left:482px;top:286px;width:224px;height:20px;background:#c6c6c6;"></div>
<div class="t" style="left:508.78px;top:250.84px;font-size:12px;color:#333;letter-spacing:-0.233px;">Оси</div>
<div class="t" style="left:508.78px;top:270.84px;font-size:12px;color:#333;letter-spacing:-0.147px;">Названия осей</div>
<div class="t" style="left:508.78px;top:290.84px;font-size:12px;color:#333;letter-spacing:-0.065px;">Название диаграммы</div>
<div class="t" style="left:508.78px;top:310.84px;font-size:12px;color:#333;letter-spacing:0.018px;">Подписи данных</div>
<div class="t" style="left:508.78px;top:330.84px;font-size:12px;color:#333;letter-spacing:-0.067px;">Таблица данных</div>
<div class="t" style="left:508.78px;top:350.84px;font-size:12px;color:#333;letter-spacing:0.066px;">Предел погрешностей</div>
<div class="t" style="left:508.78px;top:370.84px;font-size:12px;color:#333;letter-spacing:-0.386px;">Сетка</div>
<div class="t" style="left:508.78px;top:390.84px;font-size:12px;color:#333;letter-spacing:-0.260px;">Легенда</div>
<div class="t" style="left:508.78px;top:410.84px;font-size:12px;color:#333;letter-spacing:-0.074px;">Линия тренда</div>
<div class="t" style="left:508.78px;top:430.84px;font-size:12px;color:#333;letter-spacing:0.169px;">Полосы повышения и понижения</div>
<svg class="a" style="left:0;top:0" width="977" height="781"><rect x="485.5" y="249.5" width="13" height="13" fill="none" stroke="#5a5a5a" stroke-width="1"/><path d="M487.8 256L490.6 259L496.3 252.6" fill="none" stroke="#3b78c2" stroke-width="2"/><rect x="485.5" y="269.5" width="13" height="13" fill="none" stroke="#5a5a5a" stroke-width="1"/><path d="M487.8 276L490.6 279L496.3 272.6" fill="none" stroke="#3b78c2" stroke-width="2"/><rect x="485.5" y="289.5" width="13" height="13" fill="none" stroke="#5a5a5a" stroke-width="1"/><path d="M487.8 296L490.6 299L496.3 292.6" fill="none" stroke="#3b78c2" stroke-width="2"/><rect x="485.5" y="309.5" width="13" height="13" fill="none" stroke="#5a5a5a" stroke-width="1"/><rect x="485.5" y="329.5" width="13" height="13" fill="none" stroke="#5a5a5a" stroke-width="1"/><rect x="485.5" y="349.5" width="13" height="13" fill="none" stroke="#5a5a5a" stroke-width="1"/><rect x="485.5" y="369.5" width="13" height="13" fill="none" stroke="#5a5a5a" stroke-width="1"/><path d="M487.8 376L490.6 379L496.3 372.6" fill="none" stroke="#3b78c2" stroke-width="2"/><rect x="485.5" y="389.5" width="13" height="13" fill="none" stroke="#5a5a5a" stroke-width="1"/><path d="M487.8 396L490.6 399L496.3 392.6" fill="none" stroke="#3b78c2" stroke-width="2"/><rect x="485.5" y="409.5" width="13" height="13" fill="none" stroke="#5a5a5a" stroke-width="1"/><rect x="485.5" y="429.5" width="13" height="13" fill="none" stroke="#5a5a5a" stroke-width="1"/></svg>
<svg class="a" style="left:725px;top:291px;" width="6" height="9" viewBox="0 0 6 9"><path d="M0 0L5.5 4.5L0 9Z" fill="#404040"/></svg>
<svg class="a" style="left:0;top:0" width="977" height="781"><path d="M746.5 286V277.5H952.5V365.5H746.5V305.5L737.5 295.5Z" fill="#fff" stroke="#217346" stroke-width="1"/></svg>
<div class="a" style="left:758px;top:282px;width:183px;height:24px;background:#c6c6c6;"></div>
<div class="t" style="left:764.08px;top:288.84px;font-size:12px;color:#333;letter-spacing:-0.044px;">Над диаграммой</div>
<div class="t" style="left:764.08px;top:312.84px;font-size:12px;color:#333;letter-spacing:0.024px;">Наложение по центру</div>
<div class="t" style="left:764.08px;top:336.84px;font-size:12px;color:#333;">Дополнительные параметры...</div>
<svg class="a" style="left:0;top:0" width="977" height="781"><defs><filter id="sh" x="-30%" y="-30%" width="160%" height="160%"><feGaussianBlur in="SourceAlpha" stdDeviation="2"/><feOffset dx="-2" dy="3"/><feComponentTransfer><feFuncA type="linear" slope="0.55"/></feComponentTransfer><feMerge><feMergeNode/><feMergeNode in="SourceGraphic"/></feMerge></filter></defs><g filter="url(#sh)"><path d="M664.7 257.4L697 278.5" stroke="#fc4246" stroke-width="9" stroke-linecap="round"/><path d="M702.5 265.1L686.1 289.7L718.9 293.3Z" fill="#fc4246" stroke="#fc4246" stroke-width="0.5" stroke-linejoin="round"/></g></svg>
<div class="a" style="left:955px;top:199px;width:21px;height:531px;background:#e6e6e6;"></div>
<div class="a" style="left:954px;top:218px;width:1px;height:512px;background:#a6a6a6;"></div>
<div class="a" style="left:958px;top:201px;width:15px;height:15px;background:#fff;border:1px solid #ababab;"></div>
<svg class="a" style="left:961.5px;top:206px;" width="8" height="4" viewBox="0 0 8 4"><path d="M0 4H8L4 0Z" fill="#6d6d6d"/></svg>
<div class="a" style="left:958px;top:216px;width:15px;height:479px;background:#fff;border:1px solid #ababab;"></div>
<div class="a" style="left:958px;top:695px;width:15px;height:21px;background:#dcdcdc;"></div>
<div class="a" style="left:958px;top:716px;width:15px;height:15px;background:#fff;border:1px solid #ababab;"></div>
<svg class="a" style="left:961.5px;top:721px;" width="8" height="4" viewBox="0 0 8 4"><path d="M0 0H8L4 4Z" fill="#6d6d6d"/></svg>
<div class="a" style="left:0px;top:730px;width:977px;height:28px;background:#e6e6e6;"></div>
<div class="a" style="left:0px;top:730px;width:977px;height:1px;background:#b4b4b4;"></div>
<div class="a" style="left:101px;top:730px;width:60px;height:24px;background:#fff;border:1px solid #b8b8b8;border-top:none;"></div>
<div class="a" style="left:101px;top:752px;width:60px;height:3px;background:#217346;"></div>
<div class="t" style="left:112.28px;top:737.84px;font-size:12px;color:#217346;font-weight:700;letter-spacing:0.112px;-webkit-text-stroke:0.3px #217346;">Лист1</div>
<svg class="a" style="left:194px;top:736px;" width="16" height="16" viewBox="0 0 16 16"><circle cx="7.7" cy="8.2" r="7" fill="none" stroke="#7a7a7a" stroke-width="1"/><path d="M7.7 4.5V11.9M4 8.2H11.4" stroke="#6a6a6a" stroke-width="1.6"/></svg>
<div class="a" style="left:586px;top:739px;width:2px;height:2px;background:#a8a8a8;"></div>
<div class="a" style="left:586px;top:743px;width:2px;height:2px;background:#a8a8a8;"></div>
<div class="a" style="left:586px;top:747px;width:2px;height:2px;background:#a8a8a8;"></div>
<div class="a" style="left:603px;top:737px;width:15px;height:15px;background:#fff;border:1px solid #ababab;"></div>
<svg class="a" style="left:608px;top:741px;" width="5" height="7" viewBox="0 0 5 7"><path d="M5 0V7L0 3.5Z" fill="#6d6d6d"/></svg>
<div class="a" style="left:617px;top:737px;width:299px;height:15px;background:#fff;border:1px solid #ababab;border-left:2px solid #a0a0a0;"></div>
<div class="a" style="left:916px;top:737px;width:24px;height:15px;background:#dcdcdc;"></div>
<div class="a" style="left:940px;top:737px;width:15px;height:15px;background:#fff;border:1px solid #ababab;"></div>
<svg class="a" style="left:945px;top:741px;" width="5" height="7" viewBox="0 0 5 7"><path d="M0 0V7L5 3.5Z" fill="#6d6d6d"/></svg>
<div class="a" style="left:0px;top:758px;width:977px;height:21px;background:#f1f1f1;"></div>
<div class="a" style="left:0px;top:758px;width:977px;height:1px;background:#d2d2d2;"></div>
<div class="t" style="left:8.78px;top:761.84px;font-size:12px;color:#444;letter-spacing:-0.097px;">Готово</div>
<div class="t" style="left:71.78px;top:761.84px;font-size:12px;color:#444;letter-spacing:-0.395px;">Восстановлен</div>
<div class="a" style="left:673px;top:759px;width:38px;height:20px;background:#c6c6c6;"></div>
<svg class="a" style="left:0;top:0" width="977" height="781"><rect x="685" y="762" width="13" height="13" fill="#777"/><path d="M689.5 762V775M693.5 762V775M685 766.5H698M685 770.5H698" stroke="#c6c6c6" stroke-width="1"/></svg>
<svg class="a" style="left:723px;top:762px;" width="14" height="14" viewBox="0 0 14 14"><rect x="0.6" y="0.6" width="12.8" height="12.8" fill="none" stroke="#6e6e6e" stroke-width="1.2"/><rect x="3.5" y="2.5" width="7" height="9" fill="none" stroke="#6e6e6e" stroke-width="1"/><path d="M5 4.8H9M5 7H9M5 9.2H9" stroke="#6e6e6e" stroke-width="1"/></svg>
<svg class="a" style="left:761px;top:762px;" width="14" height="14" viewBox="0 0 14 14"><rect x="0.6" y="0.6" width="12.8" height="12.8" fill="none" stroke="#6e6e6e" stroke-width="1.2"/><path d="M4.5 0.6V7.5M8.3 0.6V7.5M0.6 7.5H8.9" fill="none" stroke="#6e6e6e" stroke-width="1.2"/></svg>
<div class="a" style="left:792px;top:768px;width:6px;height:2px;background:#6e6e6e;"></div>
<div class="a" style="left:802px;top:768px;width:100px;height:1px;background:#9a9a9a;"></div>
<div class="a" style="left:850px;top:763px;width:4px;height:10px;background:#6e6e6e;"></div>
<svg class="a" style="left:906px;top:764px;" width="9" height="10" viewBox="0 0 9 10"><path d="M4.5 0.3V9.3M0 4.8H9" stroke="#6e6e6e" stroke-width="2"/></svg>
<div class="t" style="left:929.78px;top:761.84px;font-size:12px;color:#555;letter-spacing:-1.041px;">100%</div>
<div class="a" style="left:1px;top:60px;width:1px;height:720px;background:#fbf8f9;"></div>
<div class="a" style="left:975px;top:60px;width:1px;height:720px;background:#fbf8f9;"></div>
<div class="a" style="left:0px;top:779px;width:977px;height:1px;background:#fbf8f9;"></div>
<div class="a" style="left:0px;top:0px;width:1px;height:781px;background:#1a6b3c;"></div>
<div class="a" style="left:976px;top:0px;width:1px;height:781px;background:#1a6b3c;"></div>
<div class="a" style="left:0px;top:780px;width:977px;height:1px;background:#1a6b3c;"></div>
<svg class="a" style="left:0;top:0" width="977" height="781"><rect x="20.8" y="696.5" width="71.5" height="57" rx="5" fill="rgba(255,255,255,0.55)" stroke="#6a6a6a" stroke-width="1"/><rect x="25.5" y="700.5" width="63" height="48" rx="5" fill="rgba(255,255,255,0.35)" stroke="#666" stroke-width="3"/><path d="M44 754H67V757A2.5 2.5 0 0 1 64.5 759.5H46.5A2.5 2.5 0 0 1 44 757Z" fill="#fafafa" stroke="#777" stroke-width="1"/><path d="M30.5 704.5L48 711L44.3 714.7L57.6 728.3L55.5 730.4L42.2 716.8L37 721.5Z" fill="#6b6b6b"/><g opacity="0.92"><path d="M105.5 722.2A6.2 6.2 0 0 1 111.7 716H122.3A6.2 6.2 0 0 1 128.5 722.2V729.5A6.2 6.2 0 0 1 122.3 735.7H111.7A6.2 6.2 0 0 1 105.5 729.5Z" fill="none" stroke="#5a5a5a" stroke-width="8.6" stroke-linecap="round" stroke-linejoin="round"/><path d="M105.5 722.2A6.2 6.2 0 0 1 111.7 716H122.3A6.2 6.2 0 0 1 128.5 722.2V729.5A6.2 6.2 0 0 1 122.3 735.7H111.7A6.2 6.2 0 0 1 105.5 729.5Z" fill="none" stroke="#f56a86" stroke-width="6" stroke-linecap="round" stroke-linejoin="round"/><path d="M158.8 716H141.5A4.9 4.9 0 0 0 136.6 720.9V721A4.9 4.9 0 0 0 141.5 725.9H153.9A4.9 4.9 0 0 1 158.8 730.8V730.8A4.9 4.9 0 0 1 153.9 735.7H136.2" fill="none" stroke="#5a5a5a" stroke-width="8.6" stroke-linecap="round" stroke-linejoin="round"/><path d="M158.8 716H141.5A4.9 4.9 0 0 0 136.6 720.9V721A4.9 4.9 0 0 0 141.5 725.9H153.9A4.9 4.9 0 0 1 158.8 730.8V730.8A4.9 4.9 0 0 1 153.9 735.7H136.2" fill="none" stroke="#f56a86" stroke-width="6" stroke-linecap="round" stroke-linejoin="round"/></g><g opacity="0.85"><path d="M178.9 715V737.2M201 715V737.2M178.9 726.8H201" fill="none" stroke="#666" stroke-width="7.6" stroke-linecap="square" stroke-linejoin="round"/><path d="M178.9 715V737.2M201 715V737.2M178.9 726.8H201" fill="none" stroke="#f7f7f7" stroke-width="4.6" stroke-linecap="square" stroke-linejoin="round"/><path d="M220.2 736.1H212.5A3 3 0 0 1 209.5 733.1V724.5A3 3 0 0 1 212.5 721.5H217.2A3 3 0 0 1 220.2 724.5V728.8H209.5" fill="none" stroke="#666" stroke-width="7.6" stroke-linecap="square" stroke-linejoin="round"/><path d="M220.2 736.1H212.5A3 3 0 0 1 209.5 733.1V724.5A3 3 0 0 1 212.5 721.5H217.2A3 3 0 0 1 220.2 724.5V728.8H209.5" fill="none" stroke="#f7f7f7" stroke-width="4.6" stroke-linecap="square" stroke-linejoin="round"/><path d="M228.8 713.5V733A3 3 0 0 0 231.8 736.1H236.5" fill="none" stroke="#666" stroke-width="7.6" stroke-linecap="square" stroke-linejoin="round"/><path d="M228.8 713.5V733A3 3 0 0 0 231.8 736.1H236.5" fill="none" stroke="#f7f7f7" stroke-width="4.6" stroke-linecap="square" stroke-linejoin="round"/><path d="M245.5 742.3V724.5A3 3 0 0 1 248.5 721.5H261.8A3 3 0 0 1 264.8 724.5V733.1A3 3 0 0 1 261.8 736.1H245.5" fill="none" stroke="#666" stroke-width="7.6" stroke-linecap="square" stroke-linejoin="round"/><path d="M245.5 742.3V724.5A3 3 0 0 1 248.5 721.5H261.8A3 3 0 0 1 264.8 724.5V733.1A3 3 0 0 1 261.8 736.1H245.5" fill="none" stroke="#f7f7f7" stroke-width="4.6" stroke-linecap="square" stroke-linejoin="round"/><path d="M287.8 736.1H276.3A3 3 0 0 1 273.3 733.1V724.5A3 3 0 0 1 276.3 721.5H284.8A3 3 0 0 1 287.8 724.5V728.8H273.3" fill="none" stroke="#666" stroke-width="7.6" stroke-linecap="square" stroke-linejoin="round"/><path d="M287.8 736.1H276.3A3 3 0 0 1 273.3 733.1V724.5A3 3 0 0 1 276.3 721.5H284.8A3 3 0 0 1 287.8 724.5V728.8H273.3" fill="none" stroke="#f7f7f7" stroke-width="4.6" stroke-linecap="square" stroke-linejoin="round"/><path d="M294.8 736.6V724.5A3 3 0 0 1 297.8 721.5H309.3" fill="none" stroke="#666" stroke-width="7.6" stroke-linecap="square" stroke-linejoin="round"/><path d="M294.8 736.6V724.5A3 3 0 0 1 297.8 721.5H309.3" fill="none" stroke="#f7f7f7" stroke-width="4.6" stroke-linecap="square" stroke-linejoin="round"/></g></svg>
</body></html>
